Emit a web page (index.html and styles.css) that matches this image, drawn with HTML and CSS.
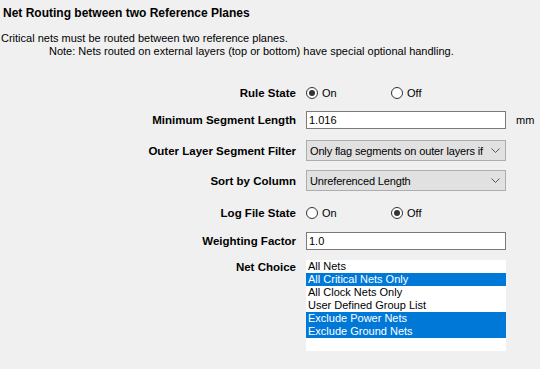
FILE: index.html
```html
<!DOCTYPE html>
<html>
<head>
<meta charset="utf-8">
<link rel="stylesheet" href="styles.css">
</head>
<body>
<div class="page">
  <div class="title">Net Routing between two Reference Planes</div>
  <div class="desc">
    <div class="line">Critical nets must be routed between two reference planes.</div>
    <div class="line note">Note: Nets routed on external layers (top or bottom) have special optional handling.</div>
  </div>
  <div class="form">
    <div class="row r-rule">
      <div class="label">Rule State</div>
      <div class="radios">
        <label class="radio"><span class="dot checked"></span><span>On</span></label>
        <label class="radio"><span class="dot"></span><span>Off</span></label>
      </div>
    </div>
    <div class="row r-seg">
      <div class="label">Minimum Segment Length</div>
      <div class="input">1.016</div>
      <div class="unit">mm</div>
    </div>
    <div class="row r-outer">
      <div class="label">Outer Layer Segment Filter</div>
      <div class="select"><span class="sel-text">Only flag segments on outer layers if tl</span><svg class="chev" width="9" height="6" viewBox="0 0 9 6"><polyline points="0.5,0.5 4.5,4.5 8.5,0.5" fill="none" stroke="#555" stroke-width="1"/></svg></div>
    </div>
    <div class="row r-sort">
      <div class="label">Sort by Column</div>
      <div class="select"><span class="sel-text">Unreferenced Length</span><svg class="chev" width="9" height="6" viewBox="0 0 9 6"><polyline points="0.5,0.5 4.5,4.5 8.5,0.5" fill="none" stroke="#555" stroke-width="1"/></svg></div>
    </div>
    <div class="row r-log">
      <div class="label">Log File State</div>
      <div class="radios">
        <label class="radio"><span class="dot"></span><span>On</span></label>
        <label class="radio"><span class="dot checked"></span><span>Off</span></label>
      </div>
    </div>
    <div class="row r-weight">
      <div class="label">Weighting Factor</div>
      <div class="input">1.0</div>
    </div>
    <div class="row r-net">
      <div class="label">Net Choice</div>
      <div class="list">
        <div class="item">All Nets</div>
        <div class="item sel">All Critical Nets Only</div>
        <div class="item">All Clock Nets Only</div>
        <div class="item">User Defined Group List</div>
        <div class="item sel">Exclude Power Nets</div>
        <div class="item sel">Exclude Ground Nets</div>
      </div>
    </div>
  </div>
</div>
</body>
</html>
```
FILE: styles.css
```css
html, body {
  margin: 0;
  padding: 0;
  background: #f0f0f0;
}
.page {
  width: 540px;
  height: 369px;
  font-family: "Liberation Sans", Arial, sans-serif;
  font-size: 11px;
  color: #000;
  overflow: hidden;
}
.title {
  font-weight: bold;
  font-size: 12px;
  line-height: 14px;
  padding: 6px 0 0 3px;
}
.desc {
  margin-top: 12px;
  padding-left: 1px;
}
.line {
  line-height: 13px;
  white-space: nowrap;
}
.note {
  padding-left: 48px;
}
.form {
  display: flex;
  flex-direction: column;
  margin-top: 25px;
}
.row {
  display: flex;
  align-items: center;
  height: 20px;
}
.label {
  width: 306px;
  text-align: right;
  font-weight: bold;
  font-size: 11.5px;
  padding-right: 10px;
  box-sizing: border-box;
  white-space: nowrap;
}
.r-seg { margin-top: 7px; }
.r-outer { margin-top: 10px; height: 21px; }
.r-sort { margin-top: 9px; height: 21px; }
.r-log { margin-top: 12px; }
.r-weight { margin-top: 8px; }
.r-net { margin-top: 9px; align-items: flex-start; height: auto; }
.r-net .label { padding-top: 1px; }
.radios {
  display: flex;
}
.radio {
  display: flex;
  align-items: center;
  width: 85px;
  gap: 4px;
}
.dot {
  width: 12px;
  height: 12px;
  box-sizing: border-box;
  border: 1px solid #333;
  border-radius: 50%;
  background: #fff;
  display: flex;
  align-items: center;
  justify-content: center;
}
.dot.checked::after {
  content: "";
  width: 6px;
  height: 6px;
  border-radius: 50%;
  background: #333;
}
.input {
  width: 200px;
  height: 18px;
  box-sizing: border-box;
  border: 1px solid #7a7a7a;
  background: #fff;
  padding: 0 2px;
  line-height: 16px;
  font-size: 11px;
}
.unit {
  margin-left: 10px;
  font-size: 11px;
}
.select {
  width: 200px;
  height: 21px;
  box-sizing: border-box;
  border: 1px solid #adadad;
  background: #e1e1e1;
  display: flex;
  align-items: center;
  padding: 0 5px 0 3px;
  font-size: 11px;
}
.sel-text {
  flex: 1;
  overflow: hidden;
  white-space: nowrap;
  letter-spacing: -0.15px;
}
.chev {
  margin-left: 6px;
  flex: none;
}
.list {
  width: 200px;
  height: 91px;
  background: #fff;
  font-size: 11px;
}
.item {
  height: 13px;
  line-height: 13px;
  padding-left: 2px;
  white-space: nowrap;
}
.item.sel {
  background: #0078d7;
  color: #fff;
}
```
